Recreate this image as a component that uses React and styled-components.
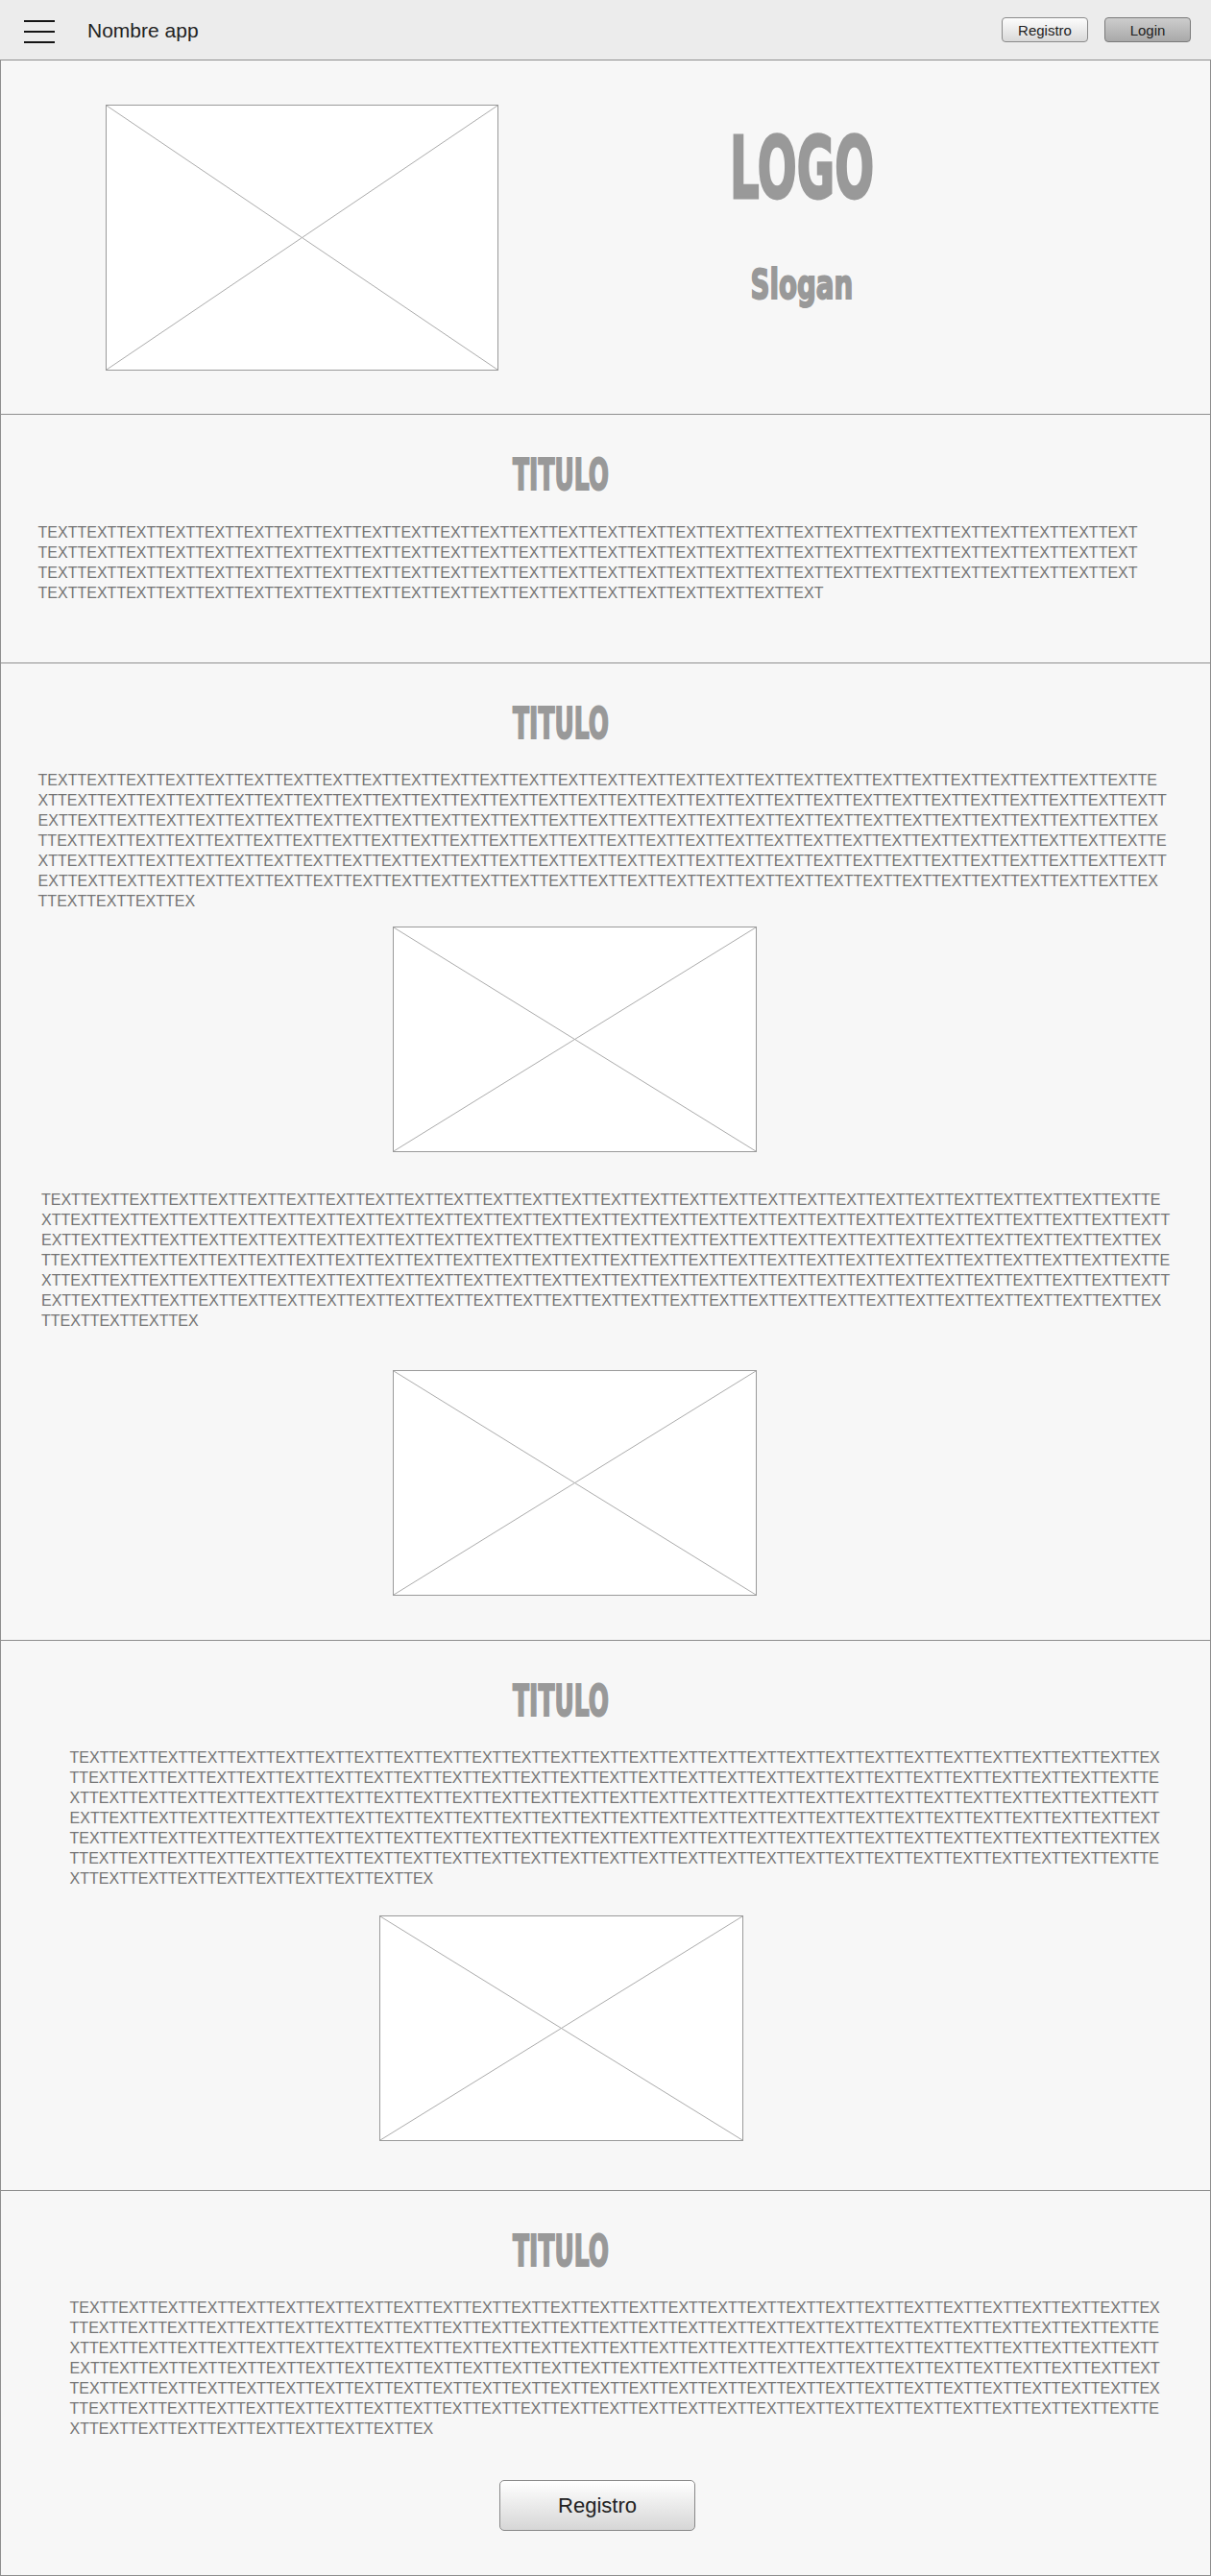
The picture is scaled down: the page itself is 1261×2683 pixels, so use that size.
import React from "react";
import styled, { createGlobalStyle } from "styled-components";

const GlobalStyle = createGlobalStyle`
  html, body {
    margin: 0;
    padding: 0;
    background: #f7f7f7;
  }
  body {
    font-family: "Liberation Sans", Arial, sans-serif;
  }
  * {
    box-sizing: border-box;
  }
`;

const Page = styled.div`
  width: 1261px;
`;

const Header = styled.header`
  height: 62px;
  background: #ececec;
  display: flex;
  align-items: center;
  padding: 0 21px 0 25px;
`;

const Burger = styled.div`
  width: 32px;
  display: flex;
  flex-direction: column;
  gap: 9px;
  margin-top: 4px;

  span {
    display: block;
    height: 2px;
    background: #151515;
  }
`;

const AppName = styled.div`
  margin-left: 34px;
  margin-top: 2px;
  font-size: 21px;
  color: #222;
`;

const HeaderActions = styled.div`
  margin-left: auto;
  display: flex;
  gap: 17px;
`;

const HeaderButton = styled.button`
  width: 90px;
  height: 26px;
  padding: 0;
  font-family: "Liberation Sans", Arial, sans-serif;
  font-size: 15px;
  color: #222;
  border-radius: 4px;
  border: 1px solid ${(p) => (p.$dark ? "#7a7a7a" : "#8a8a8a")};
  background: ${(p) =>
    p.$dark
      ? "linear-gradient(#cdcdcd, #a9a9a9)"
      : "linear-gradient(#fdfdfd, #d9d9d9)"};
`;

const Main = styled.main`
  border: 1px solid #8e8e8e;
  border-top: none;
`;

const Section = styled.section`
  border-top: 1px solid #8e8e8e;
  background: #f7f7f7;
  padding-top: 40px;
  padding-bottom: ${(p) => p.$bottom}px;
  display: flex;
  flex-direction: column;
  align-items: flex-start;
`;

const Hero = styled.section`
  border-top: 1px solid #8e8e8e;
  background: #f7f7f7;
  display: flex;
  align-items: flex-start;
  padding: 46px 0 45px 109px;
`;

const Brand = styled.div`
  width: 300px;
  margin-left: 166px;
  margin-top: 22px;
  display: flex;
  flex-direction: column;
  align-items: center;
  color: #999;
  font-family: "DejaVu Sans", sans-serif;
  font-weight: 700;
`;

const Logo = styled.div`
  font-size: 89px;
  line-height: 1;
  transform: scaleX(0.54);
  -webkit-text-stroke: 3px #999;
`;

const Slogan = styled.div`
  margin-top: 56px;
  font-size: 42px;
  line-height: 1;
  transform: scaleX(0.66);
  -webkit-text-stroke: 2px #999;
`;

const Title = styled.h2`
  align-self: stretch;
  margin: 0 93px 0 0;
  text-align: center;
  font-family: "DejaVu Sans", sans-serif;
  font-weight: 700;
  font-size: 45px;
  line-height: 1;
  color: #999;
  transform: scaleX(0.555);
  -webkit-text-stroke: 2px #999;
`;

const Paragraph = styled.p`
  margin: ${(p) => p.$top}px 0 0 ${(p) => p.$left}px;
  width: ${(p) => p.$width}px;
  font-size: 16px;
  line-height: 21px;
  color: #747474;
  word-break: break-all;
`;

const Placeholder = styled.div`
  width: ${(p) => p.$w}px;
  height: ${(p) => p.$h}px;
  margin: ${(p) => p.$top || 0}px 0 0 ${(p) => p.$left || 0}px;
  background: #fff;
  border: 1px solid #9a9a9a;
  flex-shrink: 0;

  svg {
    display: block;
    width: 100%;
    height: 100%;
  }
`;

const BigButton = styled.button`
  margin: 43px 0 0 519px;
  width: 204px;
  height: 53px;
  padding: 0;
  font-family: "Liberation Sans", Arial, sans-serif;
  font-size: 22px;
  color: #222;
  border: 1px solid #888;
  border-radius: 5px;
  background: linear-gradient(#ffffff, #d6d6d6);
`;

const ImageBox = (props) => (
  <Placeholder {...props}>
    <svg viewBox="0 0 100 100" preserveAspectRatio="none">
      <line x1="0" y1="0" x2="100" y2="100" stroke="#ababab" strokeWidth="1" vectorEffect="non-scaling-stroke" />
      <line x1="100" y1="0" x2="0" y2="100" stroke="#ababab" strokeWidth="1" vectorEffect="non-scaling-stroke" />
    </svg>
  </Placeholder>
);

const shortText = "TEXT".repeat(104);
const longText = "TEXT".repeat(175) + "TEX";

export default function App() {
  return (
    <Page>
      <GlobalStyle />
      <Header>
        <Burger>
          <span />
          <span />
          <span />
        </Burger>
        <AppName>Nombre app</AppName>
        <HeaderActions>
          <HeaderButton>Registro</HeaderButton>
          <HeaderButton $dark>Login</HeaderButton>
        </HeaderActions>
      </Header>

      <Main>
        <Hero>
          <ImageBox $w={409} $h={277} />
          <Brand>
            <Logo>LOGO</Logo>
            <Slogan>Slogan</Slogan>
          </Brand>
        </Hero>

        <Section $bottom={62}>
          <Title>TITULO</Title>
          <Paragraph $top={27} $left={38.6} $width={1150}>
            {shortText}
          </Paragraph>
        </Section>

        <Section $bottom={46}>
          <Title>TITULO</Title>
          <Paragraph $top={26} $left={38.6} $width={1175.6}>
            {longText}
          </Paragraph>
          <ImageBox $w={379} $h={235} $top={16} $left={408} />
          <Paragraph $top={39} $left={42} $width={1175.6}>
            {longText}
          </Paragraph>
          <ImageBox $w={379} $h={235} $top={41} $left={408} />
        </Section>

        <Section $bottom={51}>
          <Title>TITULO</Title>
          <Paragraph $top={26} $left={71.6} $width={1140}>
            {longText}
          </Paragraph>
          <ImageBox $w={379} $h={235} $top={28} $left={394} />
        </Section>

        <Section $bottom={46}>
          <Title>TITULO</Title>
          <Paragraph $top={26} $left={71.6} $width={1140}>
            {longText}
          </Paragraph>
          <BigButton>Registro</BigButton>
        </Section>
      </Main>
    </Page>
  );
}
